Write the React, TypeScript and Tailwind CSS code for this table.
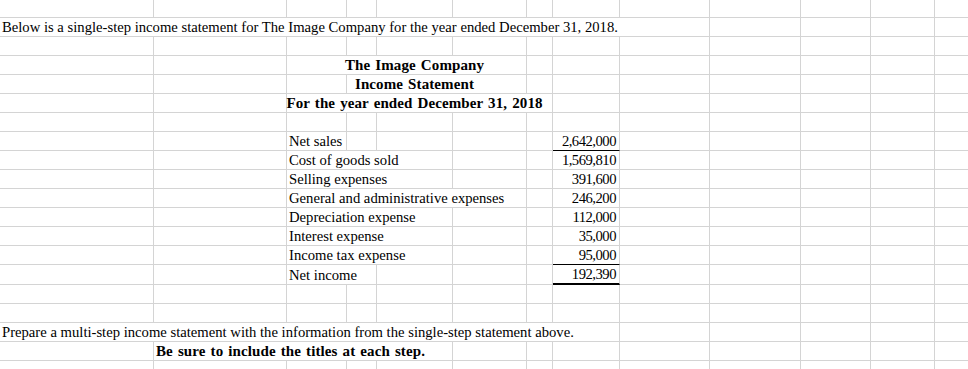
import React from 'react';

type CellProps = {
  w: string;
  children?: React.ReactNode;
  noR?: boolean;
  bottom?: string;
  className?: string;
};

function Cell({ w, children, noR, bottom, className = '' }: CellProps) {
  return (
    <div
      className={`${w} shrink-0 h-full flex items-end border-[#d4d4d4] ${noR ? '' : 'border-r'} ${bottom ?? 'border-b'} ${className}`}
    >
      {children}
    </div>
  );
}

function T({ children, bold }: { children: React.ReactNode; bold?: boolean }) {
  return (
    <span
      className={`px-[2px] leading-[18px] whitespace-nowrap ${bold ? 'font-bold text-[15px] tracking-[0.1px] [word-spacing:1.2px]' : ''}`}
    >
      {children}
    </span>
  );
}

function Num({ v, bottom }: { v: string; bottom?: string }) {
  return (
    <Cell w="w-[67px]" bottom={bottom} className="justify-end">
      <span className="pr-[3px] leading-[18px] whitespace-nowrap tracking-[-0.5px]">{v}</span>
    </Cell>
  );
}

function Title({ children, offset }: { children: React.ReactNode; offset: string }) {
  return (
    <div className={`${offset} w-[75px] flex justify-center`}>
      <span className="leading-[18px] whitespace-nowrap font-bold text-[15px] tracking-[0.1px] [word-spacing:1.2px]">
        {children}
      </span>
    </div>
  );
}

function Tail() {
  return (
    <>
      <Cell w="w-[90px]" />
      <Cell w="w-[91px]" />
      <Cell w="w-[70px]" />
      <Cell w="w-[64px]" />
      <Cell w="w-[60px]" />
    </>
  );
}

function Empty({ h = 'h-[19px]' }: { h?: string }) {
  return (
    <div className={`flex ${h}`}>
      <Cell w="w-[154px]" />
      <Cell w="w-[133px]" />
      <Cell w="w-[60px]" />
      <Cell w="w-[30px]" />
      <Cell w="w-[76px]" />
      <Cell w="w-[74px]" />
      <Cell w="w-[26px]" />
      <Cell w="w-[67px]" />
      <Tail />
    </div>
  );
}

function LabelRow({ label, value, span, bottom }: { label: string; value: string; span: 'c' | 'ce' | 'cf'; bottom?: string }) {
  return (
    <div className="flex h-[19px]">
      <Cell w="w-[154px]" />
      <Cell w="w-[133px]" />
      {span === 'c' && (
        <>
          <Cell w="w-[60px]"><T>{label}</T></Cell>
          <Cell w="w-[30px]" />
          <Cell w="w-[76px]" />
          <Cell w="w-[74px]" />
        </>
      )}
      {span === 'ce' && (
        <>
          <Cell w="w-[166px]"><T>{label}</T></Cell>
          <Cell w="w-[74px]" />
        </>
      )}
      {span === 'cf' && <Cell w="w-[240px]"><T>{label}</T></Cell>}
      <Cell w="w-[26px]" />
      <Num v={value} bottom={bottom} />
      <Tail />
    </div>
  );
}

export default function App() {
  return (
    <div className="w-[968px] h-[369px] overflow-hidden bg-white text-black text-[14.67px] [font-family:Liberation_Serif,serif]">
      <Empty h="h-[18px]" />
      <div className="flex h-[19px]">
        <Cell w="w-[620px]" noR>
          <T>Below is a single-step income statement for The Image Company for the year ended December 31, 2018.</T>
        </Cell>
        <Tail />
      </div>
      <Empty />
      <div className="flex h-[19px]">
        <Cell w="w-[154px]" />
        <Cell w="w-[133px]" />
        <Cell w="w-[240px]">
          <Title offset="ml-[90px]">The Image Company</Title>
        </Cell>
        <Cell w="w-[26px]" />
        <Cell w="w-[67px]" />
        <Tail />
      </div>
      <div className="flex h-[19px]">
        <Cell w="w-[154px]" />
        <Cell w="w-[133px]" />
        <Cell w="w-[60px]" />
        <Cell w="w-[180px]">
          <Title offset="ml-[30px]">Income Statement</Title>
        </Cell>
        <Cell w="w-[26px]" />
        <Cell w="w-[67px]" />
        <Tail />
      </div>
      <div className="flex h-[19px]">
        <Cell w="w-[154px]" />
        <Cell w="w-[133px]" />
        <Cell w="w-[266px]">
          <Title offset="ml-[90px]">For the year ended December 31, 2018</Title>
        </Cell>
        <Cell w="w-[67px]" />
        <Tail />
      </div>
      <Empty />
      <LabelRow label="Net sales" value="2,642,000" span="c" bottom="border-b border-b-black" />
      <LabelRow label="Cost of goods sold" value="1,569,810" span="ce" />
      <LabelRow label="Selling expenses" value="391,600" span="ce" />
      <LabelRow label="General and administrative expenses" value="246,200" span="cf" />
      <LabelRow label="Depreciation expense" value="112,000" span="ce" />
      <LabelRow label="Interest expense" value="35,000" span="ce" />
      <LabelRow label="Income tax expense" value="95,000" span="ce" bottom="border-b border-b-black" />
      <div className="flex h-[20px]">
        <Cell w="w-[154px]" />
        <Cell w="w-[133px]" />
        <Cell w="w-[90px]"><T>Net income</T></Cell>
        <Cell w="w-[76px]" />
        <Cell w="w-[74px]" />
        <Cell w="w-[26px]" />
        <Num v="192,390" bottom="border-b-2 border-b-black" />
        <Tail />
      </div>
      <Empty />
      <Empty />
      <div className="flex h-[19px]">
        <Cell w="w-[620px]">
          <T>Prepare a multi-step income statement with the information from the single-step statement above.</T>
        </Cell>
        <Tail />
      </div>
      <div className="flex h-[19px]">
        <Cell w="w-[154px]" />
        <Cell w="w-[299px]">
          <T bold>Be sure to include the titles at each step.</T>
        </Cell>
        <Cell w="w-[74px]" />
        <Cell w="w-[26px]" />
        <Cell w="w-[67px]" />
        <Tail />
      </div>
      <Empty />
    </div>
  );
}
